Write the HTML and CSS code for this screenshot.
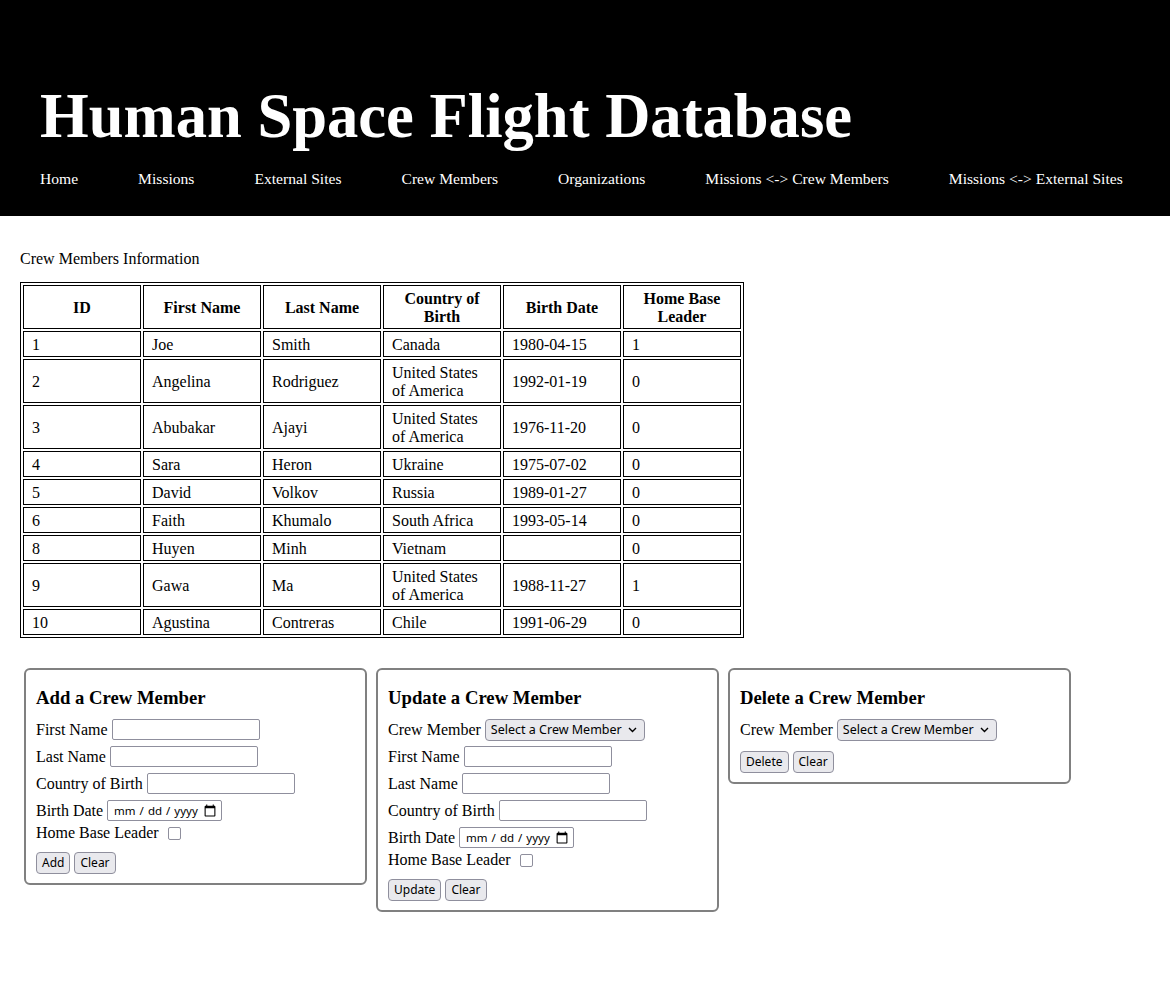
FILE: index.html
```html
<!DOCTYPE html>
<html lang="en">
<head>
<meta charset="utf-8">
<title>Human Space Flight Database - Crew Members</title>
<link rel="stylesheet" href="styles.css">
</head>
<body>
<header class="site-header">
  <h1 class="site-title">Human Space Flight Database</h1>
  <nav class="nav">
    <a href="#">Home</a>
    <a href="#">Missions</a>
    <a href="#">External Sites</a>
    <a href="#">Crew Members</a>
    <a href="#">Organizations</a>
    <a href="#">Missions &lt;-&gt; Crew Members</a>
    <a href="#">Missions &lt;-&gt; External Sites</a>
  </nav>
</header>
<main class="content">
  <p class="intro">Crew Members Information</p>
  <table class="crew">
    <thead>
      <tr><th>ID</th><th>First Name</th><th>Last Name</th><th>Country of Birth</th><th>Birth Date</th><th>Home Base Leader</th></tr>
    </thead>
    <tbody>
      <tr><td>1</td><td>Joe</td><td>Smith</td><td>Canada</td><td>1980-04-15</td><td>1</td></tr>
      <tr><td>2</td><td>Angelina</td><td>Rodriguez</td><td>United States of America</td><td>1992-01-19</td><td>0</td></tr>
      <tr><td>3</td><td>Abubakar</td><td>Ajayi</td><td>United States of America</td><td>1976-11-20</td><td>0</td></tr>
      <tr><td>4</td><td>Sara</td><td>Heron</td><td>Ukraine</td><td>1975-07-02</td><td>0</td></tr>
      <tr><td>5</td><td>David</td><td>Volkov</td><td>Russia</td><td>1989-01-27</td><td>0</td></tr>
      <tr><td>6</td><td>Faith</td><td>Khumalo</td><td>South Africa</td><td>1993-05-14</td><td>0</td></tr>
      <tr><td>8</td><td>Huyen</td><td>Minh</td><td>Vietnam</td><td></td><td>0</td></tr>
      <tr><td>9</td><td>Gawa</td><td>Ma</td><td>United States of America</td><td>1988-11-27</td><td>1</td></tr>
      <tr><td>10</td><td>Agustina</td><td>Contreras</td><td>Chile</td><td>1991-06-29</td><td>0</td></tr>
    </tbody>
  </table>

  <div class="forms">
    <form class="card">
      <h3 class="card-title">Add a Crew Member</h3>
      <div class="field"><label for="a-first">First Name</label><input id="a-first" type="text"></div>
      <div class="field"><label for="a-last">Last Name</label><input id="a-last" type="text"></div>
      <div class="field"><label for="a-country">Country of Birth</label><input id="a-country" type="text"></div>
      <div class="field"><label for="a-date">Birth Date</label><input id="a-date" type="date"></div>
      <div class="field check"><label for="a-leader">Home Base Leader</label><input id="a-leader" type="checkbox"></div>
      <div class="actions"><button type="button">Add</button><button type="button">Clear</button></div>
    </form>

    <form class="card">
      <h3 class="card-title">Update a Crew Member</h3>
      <div class="field sel">
        <label for="u-member">Crew Member</label>
        <span class="select-wrap">
          <select id="u-member"><option>Select a Crew Member</option></select>
          <svg class="chev" width="9" height="6" viewBox="0 0 9 6" aria-hidden="true"><polyline points="1,1 4.5,4.5 8,1" fill="none" stroke="#000" stroke-width="1.4"/></svg>
        </span>
      </div>
      <div class="field"><label for="u-first">First Name</label><input id="u-first" type="text"></div>
      <div class="field"><label for="u-last">Last Name</label><input id="u-last" type="text"></div>
      <div class="field"><label for="u-country">Country of Birth</label><input id="u-country" type="text"></div>
      <div class="field"><label for="u-date">Birth Date</label><input id="u-date" type="date"></div>
      <div class="field check"><label for="u-leader">Home Base Leader</label><input id="u-leader" type="checkbox"></div>
      <div class="actions"><button type="button">Update</button><button type="button">Clear</button></div>
    </form>

    <form class="card">
      <h3 class="card-title">Delete a Crew Member</h3>
      <div class="field sel last">
        <label for="d-member">Crew Member</label>
        <span class="select-wrap">
          <select id="d-member"><option>Select a Crew Member</option></select>
          <svg class="chev" width="9" height="6" viewBox="0 0 9 6" aria-hidden="true"><polyline points="1,1 4.5,4.5 8,1" fill="none" stroke="#000" stroke-width="1.4"/></svg>
        </span>
      </div>
      <div class="actions"><button type="button">Delete</button><button type="button">Clear</button></div>
    </form>
  </div>
</main>
</body>
</html>
```

FILE: styles.css
```css
html, body {
  margin: 0;
  padding: 0;
}

body {
  font-family: "Liberation Serif", "Times New Roman", serif;
  font-size: 16px;
  color: #000;
  background: #fff;
}

.site-header {
  background: #000;
  color: #fff;
  padding: 81px 40px 28px;
}

.site-title {
  margin: 0;
  font-family: "Liberation Serif", serif;
  font-weight: bold;
  font-size: 62.6px;
  line-height: 70px;
}

.nav {
  display: flex;
  gap: 60px;
  margin-top: 19px;
  font-size: 15.6px;
  line-height: 18px;
}

.nav a {
  color: #fff;
  text-decoration: none;
}

.content {
  padding: 0 20px 40px;
}

.intro {
  margin: 34px 0 14px;
  line-height: 18px;
}

.crew {
  border: 1px solid #000;
  border-spacing: 2px;
}

.crew th,
.crew td {
  border: 1px solid #000;
  width: 100px;
  padding: 4px 8px 2px;
  line-height: 18px;
  text-align: left;
  vertical-align: middle;
}

.crew th {
  text-align: center;
  font-weight: bold;
}

.forms {
  display: flex;
  align-items: flex-start;
  gap: 9px;
  margin-top: 30px;
  padding-left: 4px;
}

.card {
  width: 319px;
  border: 2px solid #808080;
  border-radius: 6px;
  padding: 17px 10px 9px;
}

.card-title {
  margin: 0 0 10px;
  font-size: 18.72px;
  line-height: 22px;
  font-weight: bold;
}

.field {
  display: flex;
  align-items: center;
  gap: 4px;
  height: 21px;
  margin-bottom: 6px;
  line-height: 18px;
}

.field.sel {
  height: 22px;
  margin-bottom: 5px;
}

.field.sel.last {
  margin-bottom: 1px;
}

.field.check {
  height: 18px;
  margin-top: -3px;
  margin-bottom: 0;
}

.field input[type="text"] {
  box-sizing: border-box;
  width: 148px;
  height: 21px;
  border: 1px solid #8f8f9d;
  border-radius: 2px;
  padding: 1px 3px;
  font-family: "Noto Sans", sans-serif;
  font-size: 13px;
  margin: 0;
  background: #fff;
}

.field input[type="date"] {
  box-sizing: border-box;
  width: 115px;
  height: 21px;
  border: 1px solid #8f8f9d;
  border-radius: 2px;
  padding: 0 4px 0 5px;
  margin: 0;
  font-family: "Noto Sans", sans-serif;
  font-size: 11.5px;
  color: #000;
  background: #fff;
}

.field input[type="date"]::-webkit-datetime-edit-text {
  padding: 0 3px;
}

.field input[type="date"]::-webkit-calendar-picker-indicator {
  margin: 0;
  padding: 0;
  width: 14px;
  height: 14px;
}

.field input[type="checkbox"] {
  appearance: none;
  -webkit-appearance: none;
  box-sizing: border-box;
  width: 13px;
  height: 13px;
  margin: 0 0 0 5px;
  border: 1px solid #8f8f9d;
  border-radius: 2px;
  background: #fff;
}

.field input[type="checkbox"]:checked {
  background: #0060df;
  border-color: #0060df;
}

.select-wrap {
  position: relative;
  display: inline-block;
  height: 22px;
}

.field select {
  appearance: none;
  -webkit-appearance: none;
  box-sizing: border-box;
  width: 160px;
  height: 22px;
  margin: 0;
  padding: 0 20px 0 5px;
  border: 1px solid #8f8f9d;
  border-radius: 4px;
  background-color: #e9e9ed;
  color: #000;
  font-family: "Noto Sans", sans-serif;
  font-size: 12.5px;
  line-height: 20px;
}

.chev {
  position: absolute;
  right: 8px;
  top: 8px;
  pointer-events: none;
}

.actions {
  display: flex;
  gap: 4px;
  margin-top: 10px;
}

.actions button {
  box-sizing: border-box;
  height: 22px;
  padding: 0 5px;
  margin: 0;
  border: 1px solid #8f8f9d;
  border-radius: 4px;
  background: #e9e9ed;
  color: #000;
  font-family: "Noto Sans", sans-serif;
  font-size: 12px;
  line-height: 18px;
}
```
